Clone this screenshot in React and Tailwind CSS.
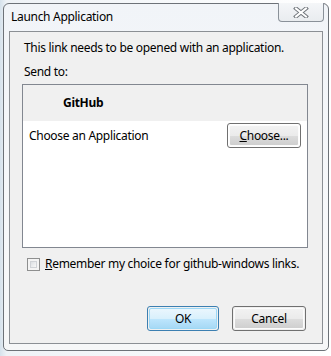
import React from "react";

const font = { fontFamily: '"Noto Sans", "Open Sans", sans-serif' };

function WinButton({ children, def, className = "" }) {
  return (
    <div
      className={`h-[25px] rounded-[3px] border flex items-center justify-center text-[12px] text-black ${
        def ? "border-[#3c7fb1] p-[1px]" : "border-[#707070] p-[1px]"
      } ${className}`}
    >
      <div
        className={`w-full h-full rounded-[2px] flex items-center justify-center ${
          def
            ? "bg-[linear-gradient(#eaf6fd_0%,#d9f0fc_50%,#bee6fd_51%,#a7d9f5_100%)] border border-[#9cd8f6]"
            : "bg-[linear-gradient(#f2f2f2_0%,#ebebeb_50%,#dddddd_51%,#cfcfcf_100%)] border border-[#fcfcfc]"
        }`}
      >
        {children}
      </div>
    </div>
  );
}

export default function App() {
  return (
    <div
      className="w-[331px] h-[356px] bg-[linear-gradient(90deg,#d6e2ec_0%,#eef2f6_2%,#ffffff_100%)] pt-[3px] pl-[3px] overflow-hidden tracking-[-0.3px] whitespace-nowrap"
      style={font}
    >
      <div className="w-[326px] h-[348px] rounded-t-[6px] rounded-b-[5px] border border-[#6d7278] bg-[linear-gradient(180deg,#f1f4f8_0%,#f7f8fa_60%,#f6f7f8_100%)] flex flex-col px-[5px] pb-[6px]">
        <div className="h-[27px] flex items-start justify-between">
          <div className="pl-[2px] pt-[5px] text-[12px] leading-[16px] text-black">Launch Application</div>
          <div className="-mt-[1px] -mr-[1px] w-[46px] h-[19px] rounded-b-[4px] border border-[#8a9199] border-t-0 bg-[linear-gradient(#f4f6f8,#e9ecef)] flex items-center justify-center">
            <svg width="16" height="11" viewBox="0 0 16 11">
              <path d="M3 1.5 L13 9.5 M13 1.5 L3 9.5" stroke="#6f747a" strokeWidth="4" strokeLinecap="square" />
              <path d="M3 1.5 L13 9.5 M13 1.5 L3 9.5" stroke="#ffffff" strokeWidth="2" strokeLinecap="square" />
            </svg>
          </div>
        </div>
        <div className="flex-1 border border-[#8b8f94] bg-[#f0f0f0] flex flex-col pl-[12px] pr-[14px] text-[12px] text-black">
          <div className="mt-[8px] pl-[2px] leading-[16px]">This link needs to be opened with an application.</div>
          <div className="mt-[8px] pl-[2px] leading-[16px]">Send to:</div>
          <div className="mt-[4px] h-[164px] border border-[#828790] bg-white flex flex-col">
            <div className="h-[36px] bg-[#f0f0f0] flex items-center pl-[40px] font-bold leading-[16px]">GitHub</div>
            <div className="h-[28px] flex items-start justify-between pl-[6px] pr-[6px] pt-[1px]">
              <div className="leading-[16px] mt-[6px]">Choose an Application</div>
              <WinButton className="w-[74px] mt-[1px]">
                <span>
                  <span className="underline">C</span>hoose...
                </span>
              </WinButton>
            </div>
          </div>
          <div className="mt-[8px] flex items-center h-[16px] pl-[5px]">
            <div className="w-[13px] h-[13px] border border-[#8e8f8f] p-[2px] bg-[#f4f4f4]">
              <div className="w-full h-full border border-[#d0d3d7] bg-[linear-gradient(135deg,#dcdfe3,#f8f8f8)]" />
            </div>
            <div className="ml-[5px] leading-[16px]">
              <span className="underline">R</span>emember my choice for github-windows links.
            </div>
          </div>
          <div className="mt-[34px] flex justify-end gap-[13px] pr-[2px]">
            <WinButton def className="w-[72px]">OK</WinButton>
            <WinButton className="w-[74px]">Cancel</WinButton>
          </div>
        </div>
      </div>
    </div>
  );
}
